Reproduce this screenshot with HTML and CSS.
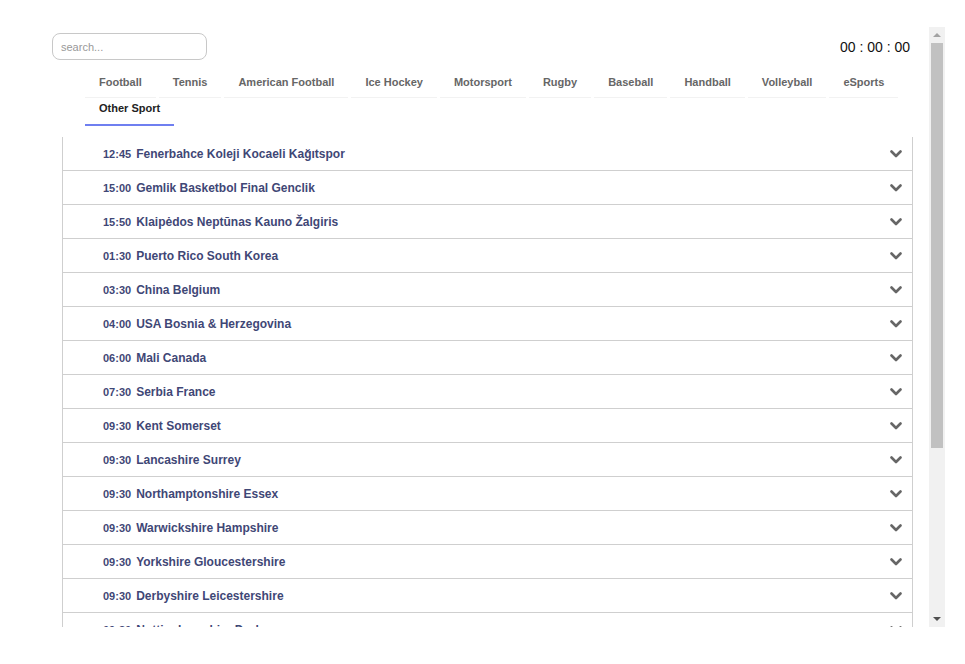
FILE: index.html
```html
<!DOCTYPE html>
<html lang="en">
<head>
<meta charset="utf-8">
<title>Schedule</title>
<link rel="stylesheet" href="styles.css">
</head>
<body>
<div class="frame">
  <div class="content">
    <div class="header">
      <input class="search" type="text" placeholder="search...">
      <div class="timer">00 : 00 : 00</div>
    </div>
    <ul class="tabs">
      <li class="tab">Football</li>
      <li class="tab">Tennis</li>
      <li class="tab">American Football</li>
      <li class="tab">Ice Hockey</li>
      <li class="tab">Motorsport</li>
      <li class="tab">Rugby</li>
      <li class="tab">Baseball</li>
      <li class="tab">Handball</li>
      <li class="tab">Volleyball</li>
      <li class="tab">eSports</li>
      <li class="tab active">Other Sport</li>
    </ul>
    <ul class="list">
      <li class="row"><span class="time">12:45</span><span class="name">Fenerbahce Koleji Kocaeli Kağıtspor</span><svg class="chev" viewBox="0 0 12 8"><polyline points="1.5,1.5 6,6 10.5,1.5"/></svg></li>
      <li class="row"><span class="time">15:00</span><span class="name">Gemlik Basketbol Final Genclik</span><svg class="chev" viewBox="0 0 12 8"><polyline points="1.5,1.5 6,6 10.5,1.5"/></svg></li>
      <li class="row"><span class="time">15:50</span><span class="name">Klaipėdos Neptūnas Kauno Žalgiris</span><svg class="chev" viewBox="0 0 12 8"><polyline points="1.5,1.5 6,6 10.5,1.5"/></svg></li>
      <li class="row"><span class="time">01:30</span><span class="name">Puerto Rico South Korea</span><svg class="chev" viewBox="0 0 12 8"><polyline points="1.5,1.5 6,6 10.5,1.5"/></svg></li>
      <li class="row"><span class="time">03:30</span><span class="name">China Belgium</span><svg class="chev" viewBox="0 0 12 8"><polyline points="1.5,1.5 6,6 10.5,1.5"/></svg></li>
      <li class="row"><span class="time">04:00</span><span class="name">USA Bosnia &amp; Herzegovina</span><svg class="chev" viewBox="0 0 12 8"><polyline points="1.5,1.5 6,6 10.5,1.5"/></svg></li>
      <li class="row"><span class="time">06:00</span><span class="name">Mali Canada</span><svg class="chev" viewBox="0 0 12 8"><polyline points="1.5,1.5 6,6 10.5,1.5"/></svg></li>
      <li class="row"><span class="time">07:30</span><span class="name">Serbia France</span><svg class="chev" viewBox="0 0 12 8"><polyline points="1.5,1.5 6,6 10.5,1.5"/></svg></li>
      <li class="row"><span class="time">09:30</span><span class="name">Kent Somerset</span><svg class="chev" viewBox="0 0 12 8"><polyline points="1.5,1.5 6,6 10.5,1.5"/></svg></li>
      <li class="row"><span class="time">09:30</span><span class="name">Lancashire Surrey</span><svg class="chev" viewBox="0 0 12 8"><polyline points="1.5,1.5 6,6 10.5,1.5"/></svg></li>
      <li class="row"><span class="time">09:30</span><span class="name">Northamptonshire Essex</span><svg class="chev" viewBox="0 0 12 8"><polyline points="1.5,1.5 6,6 10.5,1.5"/></svg></li>
      <li class="row"><span class="time">09:30</span><span class="name">Warwickshire Hampshire</span><svg class="chev" viewBox="0 0 12 8"><polyline points="1.5,1.5 6,6 10.5,1.5"/></svg></li>
      <li class="row"><span class="time">09:30</span><span class="name">Yorkshire Gloucestershire</span><svg class="chev" viewBox="0 0 12 8"><polyline points="1.5,1.5 6,6 10.5,1.5"/></svg></li>
      <li class="row"><span class="time">09:30</span><span class="name">Derbyshire Leicestershire</span><svg class="chev" viewBox="0 0 12 8"><polyline points="1.5,1.5 6,6 10.5,1.5"/></svg></li>
      <li class="row"><span class="time">09:30</span><span class="name">Nottinghamshire Durham</span><svg class="chev" viewBox="0 0 12 8"><polyline points="1.5,1.5 6,6 10.5,1.5"/></svg></li>
      <li class="row"><span class="time">09:30</span><span class="name">Sussex Middlesex</span><svg class="chev" viewBox="0 0 12 8"><polyline points="1.5,1.5 6,6 10.5,1.5"/></svg></li>
    </ul>
  </div>
  <div class="scrollbar" aria-hidden="true">
    <div class="sb-btn"><span class="arrow-up"></span></div>
    <div class="sb-thumb"></div>
    <div class="sb-rest"></div>
    <div class="sb-btn"><span class="arrow-down"></span></div>
  </div>
</div>
</body>
</html>
```
FILE: styles.css
```css
* { box-sizing: border-box; }
html, body { margin: 0; padding: 0; background: #fff; }
body { font-family: "Liberation Sans", Arial, sans-serif; }

.frame {
  margin: 27px 0 0 40px;
  width: 905px;
  height: 600px;
  display: flex;
  background: #fff;
}

.content {
  flex: 1;
  min-width: 0;
  overflow: hidden;
}

.scrollbar {
  width: 16px;
  flex: none;
  background: #f1f1f1;
  display: flex;
  flex-direction: column;
}
.sb-btn {
  height: 16px;
  flex: none;
  display: flex;
  align-items: center;
  justify-content: center;
}
.arrow-up {
  width: 0;
  height: 0;
  border-left: 4px solid transparent;
  border-right: 4px solid transparent;
  border-bottom: 4px solid #a3a3a3;
}
.arrow-down {
  width: 0;
  height: 0;
  border-left: 4px solid transparent;
  border-right: 4px solid transparent;
  border-top: 4px solid #505050;
}
.sb-thumb {
  height: 405px;
  flex: none;
  margin: 0 2px;
  background: #c1c1c1;
}
.sb-rest { flex: 1; }

.header {
  display: flex;
  justify-content: space-between;
  align-items: center;
  padding: 6px 19px 0 12px;
}

.search {
  width: 155px;
  height: 27px;
  border: 1px solid #c8c8c8;
  border-radius: 8px;
  padding: 0 8px;
  font-family: "Liberation Sans", Arial, sans-serif;
  font-size: 11px;
  color: #333;
  outline: none;
}
.search::placeholder { color: #999; }

.timer {
  font-family: "Liberation Sans", Arial, sans-serif;
  font-size: 14px;
  color: #111;
}

.tabs {
  list-style: none;
  margin: 7px 0 0 45px;
  padding: 0;
  width: 816px;
  display: flex;
  flex-wrap: wrap;
  column-gap: 3px;
}

.tab {
  padding: 9px 14px 8px;
  font-size: 11px;
  line-height: 13px;
  font-weight: bold;
  color: #666;
  border-bottom: 1px solid #f2f2f2;
}
.tab.active {
  color: #222;
  padding: 4px 14px 9px;
  border-bottom: 2px solid #6f7ff0;
}

.list {
  list-style: none;
  margin: 11px 16px 0 22px;
  padding: 0;
  border-left: 1px solid #cfcfcf;
  border-right: 1px solid #cfcfcf;
}

.row {
  display: flex;
  align-items: center;
  height: 34px;
  padding: 0 10px 0 40px;
  border-bottom: 1px solid #cfcfcf;
  color: #3f4776;
  font-weight: bold;
}

.time {
  font-size: 11px;
  margin-right: 5px;
}
.name {
  font-size: 12px;
  flex: 1;
}

.chev {
  width: 12px;
  height: 8px;
  fill: none;
  stroke: #666;
  stroke-width: 2.6;
  stroke-linecap: round;
  stroke-linejoin: round;
}
```
